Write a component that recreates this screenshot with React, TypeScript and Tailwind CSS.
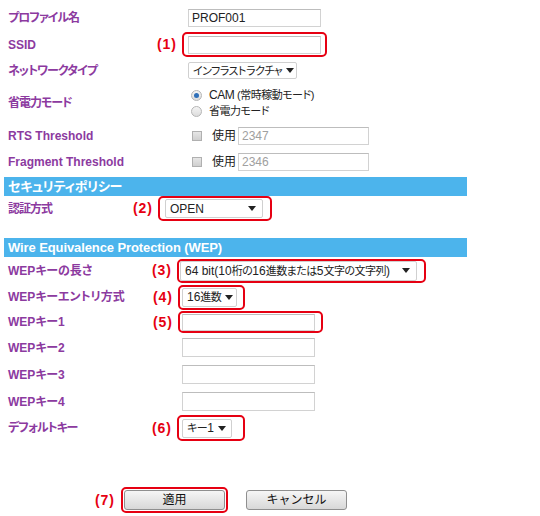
import React from 'react';

const Caret: React.FC = () => (
  <svg width="8" height="5" viewBox="0 0 8 5" className="shrink-0">
    <path d="M0 0h8L4 5z" fill="#222" />
  </svg>
);

const Label: React.FC<{ w: string; jp?: boolean; children: React.ReactNode }> = ({ w, jp, children }) => (
  <div
    className={`${w} shrink-0 pl-2 text-[12px] font-bold text-[#8c3a9f] [font-feature-settings:'palt'] ${
      jp ? 'tracking-[-1px]' : ''
    }`}
  >
    {children}
  </div>
);

const Num: React.FC<{ n?: string }> = ({ n }) => (
  <div className="w-[30px] shrink-0 pr-[5px] text-right text-[14px] font-bold tracking-[1px] text-[#e60012]">
    {n}
  </div>
);

const TextBox: React.FC<{ w: string; h: string; value?: string; muted?: boolean }> = ({ w, h, value, muted }) => (
  <div
    className={`${w} ${h} flex items-center border border-[#d2d2d2] border-t-[#bdbdbd] bg-white px-[3px] text-[12px] ${
      muted ? 'text-[#a0a0a0]' : 'text-[#222]'
    }`}
  >
    {value}
  </div>
);

// Japanese text inside form controls is set a little tighter than the labels
const Jp: React.FC<{ children: React.ReactNode }> = ({ children }) => (
  <span className="text-[11px] tracking-[-0.5px] [font-feature-settings:'palt']">{children}</span>
);

const Select: React.FC<{ w: string; h: string; children: React.ReactNode }> = ({ w, h, children }) => (
  <div
    className={`${w} ${h} flex items-center justify-between gap-[4px] rounded-[2px] border border-[#d0d0d0] bg-white pl-[4px] pr-[6px] text-[12px] text-[#222]`}
  >
    <span className="whitespace-nowrap">{children}</span>
    <Caret />
  </div>
);

const RedBox: React.FC<{ w: string; h: string; pad: string; children: React.ReactNode }> = ({ w, h, pad, children }) => (
  <div className={`${w} ${h} ${pad} flex items-center rounded-[5px] border-2 border-[#e60012]`}>{children}</div>
);

const Radio: React.FC<{ checked?: boolean }> = ({ checked }) => (
  <span className="flex h-[11px] w-[11px] shrink-0 items-center justify-center rounded-full border border-[#b5b5b5] bg-gradient-to-b from-[#f4f4f4] to-[#dcdcdc]">
    {checked && <span className="h-[5px] w-[5px] rounded-full bg-[#2f6fb8]" />}
  </span>
);

const Check: React.FC = () => (
  <span className="h-[10px] w-[10px] shrink-0 border border-[#b0b0b0] bg-gradient-to-b from-[#e6e6e6] to-[#cfcfcf]" />
);

const Bar: React.FC<{ children: React.ReactNode }> = ({ children }) => (
  <div className="ml-[4px] flex h-[19px] w-[463px] items-center bg-[#4cb4ec] pl-[4px] text-[13px] font-bold text-white [font-feature-settings:'palt']">
    {children}
  </div>
);

const Button: React.FC<{ children: React.ReactNode }> = ({ children }) => (
  <div className="flex h-[20px] w-[101px] items-center justify-center rounded-[3px] border border-[#8f8f8f] bg-gradient-to-b from-[#f6f6f6] to-[#d8d8d8] text-[12px] text-[#111]">
    {children}
  </div>
);

const App: React.FC = () => {
  return (
    <div className="h-[516px] w-[540px] bg-white pt-[4px] font-['Liberation_Sans','Noto_Sans_CJK_JP',sans-serif] text-[#222]">
      <div className="flex h-[28px] items-center">
        <Label w="w-[158px]" jp>プロファイル名</Label>
        <Num />
        <TextBox w="w-[133px]" h="h-[18px]" value="PROF001" />
      </div>

      <div className="flex h-[25px] items-center">
        <Label w="w-[152px]">SSID</Label>
        <Num n="(1)" />
        <RedBox w="w-[145px]" h="h-[25px]" pad="justify-center">
          <TextBox w="w-[133px]" h="h-[18px]" />
        </RedBox>
      </div>

      <div className="flex h-[27px] items-center">
        <Label w="w-[158px]" jp>ネットワークタイプ</Label>
        <Num />
        <Select w="w-[109px]" h="h-[17px]">
          <Jp>インフラストラクチャ</Jp>
        </Select>
      </div>

      <div className="flex h-[38px] items-center">
        <Label w="w-[161px]" jp>省電力モード</Label>
        <Num />
        <div className="flex flex-col text-[12px]">
          <div className="flex h-[16px] items-center gap-[7px]">
            <Radio checked />
            <span className="whitespace-nowrap">
              <span className="tracking-[-0.5px]">CAM </span>
              <Jp>(常時稼動モード)</Jp>
            </span>
          </div>
          <div className="flex h-[16px] items-center gap-[7px]">
            <Radio />
            <Jp>省電力モード</Jp>
          </div>
        </div>
      </div>

      <div className="flex h-[27px] items-center">
        <Label w="w-[162px]">RTS Threshold</Label>
        <Num />
        <Check />
        <span className="ml-[10px] mr-[2px] text-[12px]">使用</span>
        <TextBox w="w-[131px]" h="h-[18px]" value="2347" muted />
      </div>

      <div className="flex h-[26px] items-center">
        <Label w="w-[162px]">Fragment Threshold</Label>
        <Num />
        <Check />
        <span className="ml-[10px] mr-[2px] text-[12px]">使用</span>
        <TextBox w="w-[131px]" h="h-[18px]" value="2346" muted />
      </div>

      <div className="mt-[2px]">
        <Bar>
          <span className="tracking-[-0.3px]">セキュリティポリシー</span>
        </Bar>
      </div>

      <div className="flex h-[25px] items-center">
        <Label w="w-[128px]" jp>認証方式</Label>
        <Num n="(2)" />
        <RedBox w="w-[114px]" h="h-[25px]" pad="pl-[5px]">
          <Select w="w-[98px]" h="h-[19px]">OPEN</Select>
        </RedBox>
      </div>

      <div className="mt-[17px]">
        <Bar>
          <span className="tracking-[-0.1px]">Wire Equivalence Protection (WEP)</span>
        </Bar>
      </div>

      <div className="flex h-[27px] items-center">
        <Label w="w-[147px]">WEPキーの長さ</Label>
        <Num n="(3)" />
        <RedBox w="w-[249px]" h="h-[24px]" pad="pl-[1px]">
          <Select w="w-[237px]" h="h-[20px]">
            64 bit(10<Jp>桁の</Jp>16<Jp>進数または</Jp>5<Jp>文字の文字列</Jp>)
          </Select>
        </RedBox>
      </div>

      <div className="flex h-[26px] items-center">
        <Label w="w-[148px]">WEPキーエントリ方式</Label>
        <Num n="(4)" />
        <RedBox w="w-[67px]" h="h-[25px]" pad="pl-[2px]">
          <Select w="w-[55px]" h="h-[19px]">
            16<Jp>進数</Jp>
          </Select>
        </RedBox>
      </div>

      <div className="flex h-[24px] items-center">
        <Label w="w-[148px]">WEPキー1</Label>
        <Num n="(5)" />
        <RedBox w="w-[145px]" h="h-[22px]" pad="pl-[2px]">
          <TextBox w="w-[133px]" h="h-[17px]" />
        </RedBox>
      </div>

      <div className="flex h-[27px] items-center">
        <Label w="w-[152px]">WEPキー2</Label>
        <Num />
        <TextBox w="w-[133px]" h="h-[19px]" />
      </div>

      <div className="flex h-[27px] items-center">
        <Label w="w-[152px]">WEPキー3</Label>
        <Num />
        <TextBox w="w-[133px]" h="h-[19px]" />
      </div>

      <div className="flex h-[27px] items-center">
        <Label w="w-[152px]">WEPキー4</Label>
        <Num />
        <TextBox w="w-[133px]" h="h-[19px]" />
      </div>

      <div className="flex h-[26px] items-center">
        <Label w="w-[147px]" jp>デフォルトキー</Label>
        <Num n="(6)" />
        <RedBox w="w-[68px]" h="h-[26px]" pad="pl-[3px]">
          <Select w="w-[50px]" h="h-[19px]">
            <Jp>キー</Jp>1
          </Select>
        </RedBox>
      </div>

      <div className="mt-[46px] flex h-[26px] items-center">
        <div className="w-[121px] shrink-0 pr-[6px] text-right text-[14px] font-bold tracking-[1px] text-[#e60012]">(7)</div>
        <RedBox w="w-[107px]" h="h-[26px]" pad="justify-center">
          <Button>適用</Button>
        </RedBox>
        <div className="ml-[18px]">
          <Button>キャンセル</Button>
        </div>
      </div>
    </div>
  );
};

export default App;
